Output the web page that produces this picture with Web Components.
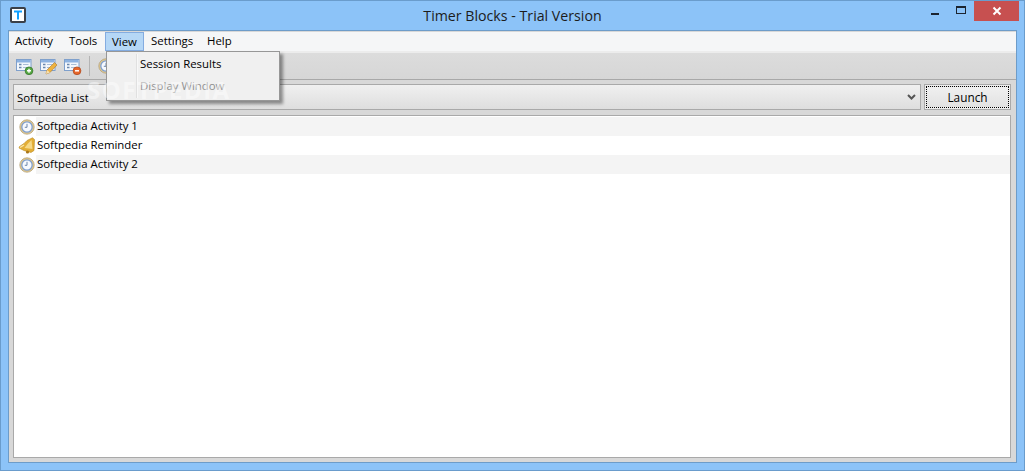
<!DOCTYPE html>
<html><head><meta charset="utf-8">
<style>
html,body{margin:0;padding:0;width:1025px;height:471px;overflow:hidden;font-family:"Open Sans","Noto Sans",sans-serif;font-size:11.4px;color:#000}
</style></head><body>
<app-window>
  <title-bar slot="title">Timer Blocks - Trial Version</title-bar>
  <menu-bar></menu-bar>
  <tool-bar></tool-bar>
  <launch-row></launch-row>
  <activity-list></activity-list>
</app-window>
<script>
const def=(n,html)=>customElements.define(n,class extends HTMLElement{constructor(){super();this.attachShadow({mode:'open'}).innerHTML=html;}});
const clock=`<svg width="16" height="16" viewBox="0 0 16 16"><circle cx="8" cy="8" r="7.200" fill="#e3c98c" stroke="#b5a27a" stroke-width=".8"/><circle cx="8" cy="8" r="5.200" fill="#f6f9fe" stroke="#7f9fd0" stroke-width="1.300"/><path d="M8 4.800V8.300H5.800" fill="none" stroke="#6d86aa" stroke-width="1"/></svg>`;
const bell=`<svg width="18" height="18" viewBox="0 0 18 18"><path d="M14.500 .8 16.500 2.500 16 13.500 13 15.500 6 13.500 1 11 1.500 9.500 6 6.500 9 3.500Z" fill="#e3ae36" stroke="#b98a22" stroke-width=".6"/><path d="M13.500 3 14.500 12 6.500 11 10 6.500Z" fill="#f6d987"/><path d="M2 10.500 6 8" stroke="#fbe7a8" stroke-width="1.400"/><circle cx="9.500" cy="15" r="1.600" fill="#a9761a"/></svg>`;
const doc=(badge)=>`<svg width="18" height="17" viewBox="0 0 18 17"><rect x=".5" y="1.500" width="14.500" height="11" fill="#f3f7fc" stroke="#7fa0cc"/><rect x="1" y="2" width="13.500" height="2.500" fill="#8db2e0"/><path d="M3 6.500h2.500M3 9.500h2.500" stroke="#6a86ad" stroke-width="1.300"/><path d="M7 6.500h5.500M7 9.500h5.500" stroke="#a9bdd6"/>${badge}</svg>`;
const plus=`<circle cx="13" cy="12.800" r="3.900" fill="#57a843" stroke="#2f6f25" stroke-width=".7"/><path d="M11 12.800h4M13 10.800v4" stroke="#fff" stroke-width="1.400"/>`;
const minus=`<circle cx="13" cy="12.800" r="3.900" fill="#e6662a" stroke="#a8431a" stroke-width=".7"/><path d="M11 12.800h4" stroke="#fff" stroke-width="1.500"/>`;
const pen=`<path d="M6 16 7 12 14.500 4.500 17 7 10 14.500Z" fill="#eeb23e" stroke="#a9762a" stroke-width=".6"/><path d="M6 16 7 12 10 14.500Z" fill="#f7e0b0"/>`;

def('app-window',`<style>
:host{display:flex;flex-direction:column;box-sizing:border-box;width:1025px;height:471px;background:#8cc3f8;border:1px solid #6a9ccc;padding:0 7px 7px}
.client{flex:1;display:flex;flex-direction:column;min-height:0;border:1px solid #6d9cc9;position:relative;background:#d8d8d8}
.wm{position:absolute;left:78px;top:42px;font:bold 24px "Open Sans",sans-serif;letter-spacing:1.500px;color:#fff;opacity:.45;white-space:nowrap;z-index:9;pointer-events:none}
</style><slot name="title"></slot><div class="client"><slot></slot><div class="wm">SOFTPEDIA</div></div>`);

def('title-bar',`<style>
:host{display:flex;align-items:center;height:29px;flex:none;position:relative;margin:0 -7px;font-size:14.2px;color:#1c1c1c}
.ic{position:absolute;left:9px;top:6px;width:16px;height:16px;box-sizing:border-box;border:2px solid #3b4048;border-radius:2px;background:#fff;display:flex;align-items:center;justify-content:center}
.t{flex:1;text-align:center}
.btns{position:absolute;right:5px;top:0;display:flex;height:20px;align-items:stretch}
.b{display:flex;align-items:center;justify-content:center}
.x{width:45px;background:#c75050;height:20px}
</style>
<div class="ic"><svg width="10" height="10" viewBox="0 0 10 10"><path d="M1 1.500H9M5 1.500V9.500" stroke="#12a0ff" stroke-width="2" fill="none"/></svg></div>
<div class="t"><slot></slot></div>
<div class="btns">
<div class="b" style="padding-top:6px;width:26px"><svg width="9" height="3"><rect width="8" height="2" fill="#1c2430"/></svg></div>
<div class="b" style="width:26px"><svg width="10" height="9" style="margin-top:-1px"><rect x=".5" y=".5" width="9" height="7" fill="none" stroke="#1c2430"/><rect width="10" height="2" fill="#1c2430"/></svg></div>
<div class="b x"><svg width="10" height="10" viewBox="0 0 10 10"><path d="M1.500 1.500 8.500 8.500M8.500 1.500 1.500 8.500" stroke="#fff" stroke-width="2"/></svg></div>
</div>`);

def('menu-bar',`<style>
:host{display:flex;align-items:stretch;flex:none;height:19px;background:#f5f6f7;border-bottom:2px solid #ececec;position:relative;z-index:5;margin-top:1px}
span{display:block;box-sizing:border-box;height:19px;line-height:18px;color:#000}
.a{background:#b5d7f6;border:1px solid #84ace0;line-height:17px;padding-left:6px}
.drop{position:absolute;left:97px;top:19px;width:174px;height:50px;box-sizing:border-box;background:#f0f0f0;border:1px solid #979797;box-shadow:3px 3px 3px rgba(0,0,0,.4);overflow:hidden}
.sep{position:absolute;left:29px;top:2px;bottom:2px;width:1px;background:#e0e0e0;border-right:1px solid #f8f8f8}
.i{position:absolute;left:33px;height:22px;line-height:22px;white-space:nowrap}
</style>
<span style="width:54px;padding-left:6px">Activity</span><span style="width:42px;padding-left:6px">Tools</span><span class="a" style="width:39px">View</span><span style="width:57px;padding-left:7px">Settings</span><span style="width:48px;padding-left:6px">Help</span>
<div class="drop"><div class="sep"></div>
<span class="i" style="top:1px">Session Results</span>
<span class="i" style="top:23px;color:#8e8e8e">Display Window</span></div>`);

def('tool-bar',`<style>
:host{display:flex;align-items:center;flex:none;height:27px;background:linear-gradient(#dcdcdc,#d6d6d6);border-bottom:1px solid #a8a8a8;padding-left:7px;gap:6px;box-sizing:border-box}
i{display:block;width:18px;height:17px}
b{display:block;width:1px;height:20px;background:#b4b4b4;margin:0 2px 0 1px}
</style><i>${doc(plus)}</i><i>${doc(pen)}</i><i>${doc(minus)}</i><b></b><i>${clock}</i>`);

def('launch-row',`<style>
:host{display:flex;flex:none;height:26px;margin:4px 5px 5px 4px;gap:3px;box-sizing:border-box}
.c{flex:1;box-sizing:border-box;border:1px solid #a9a9a9;background:linear-gradient(#f0f0f0,#dedede);display:flex;align-items:center;padding:0 4px 0 3px;justify-content:space-between;position:relative}
.btn{width:87px;box-sizing:border-box;border:1px solid #a9a9a9;padding:1px;background:#eee}
.in{height:100%;box-sizing:border-box;border:1px dotted #000;background:linear-gradient(#f0f0f0,#e2e2e2);display:flex;align-items:center;justify-content:center;font-size:11.800px}
</style><div class="c"><span>Softpedia List</span><svg width="9" height="6" viewBox="0 0 9 6"><path d="M1 1 4.500 4.500 8 1" fill="none" stroke="#555" stroke-width="2"/></svg></div>
<div class="btn"><div class="in">Launch</div></div>`);

def('activity-row',`<style>
:host{display:flex;align-items:center;height:19px;flex:none;padding-left:4px}
i{width:18px;height:19px;display:flex;align-items:center;justify-content:center;flex:none}
span{flex:1;height:19px;line-height:18px;padding-left:1px}
:host([alt]) span{background:#f4f4f4}
</style><i><slot name="icon"></slot></i><span><slot></slot></span>`);

customElements.define('activity-list',class extends HTMLElement{constructor(){super();const s=this.attachShadow({mode:'open'});
s.innerHTML=`<style>:host{display:flex;flex-direction:column;flex:1;min-height:0;background:#fff;border:1px solid #a9a9a9;margin:0 5px 4px 4px;padding-top:1px;box-sizing:border-box}
.ic{display:flex}</style>
<activity-row alt><span class="ic" slot="icon">${clock}</span>Softpedia Activity 1</activity-row>
<activity-row><span class="ic" slot="icon">${bell}</span>Softpedia Reminder</activity-row>
<activity-row alt><span class="ic" slot="icon">${clock}</span>Softpedia Activity 2</activity-row>`;}});
</script>
</body></html>
